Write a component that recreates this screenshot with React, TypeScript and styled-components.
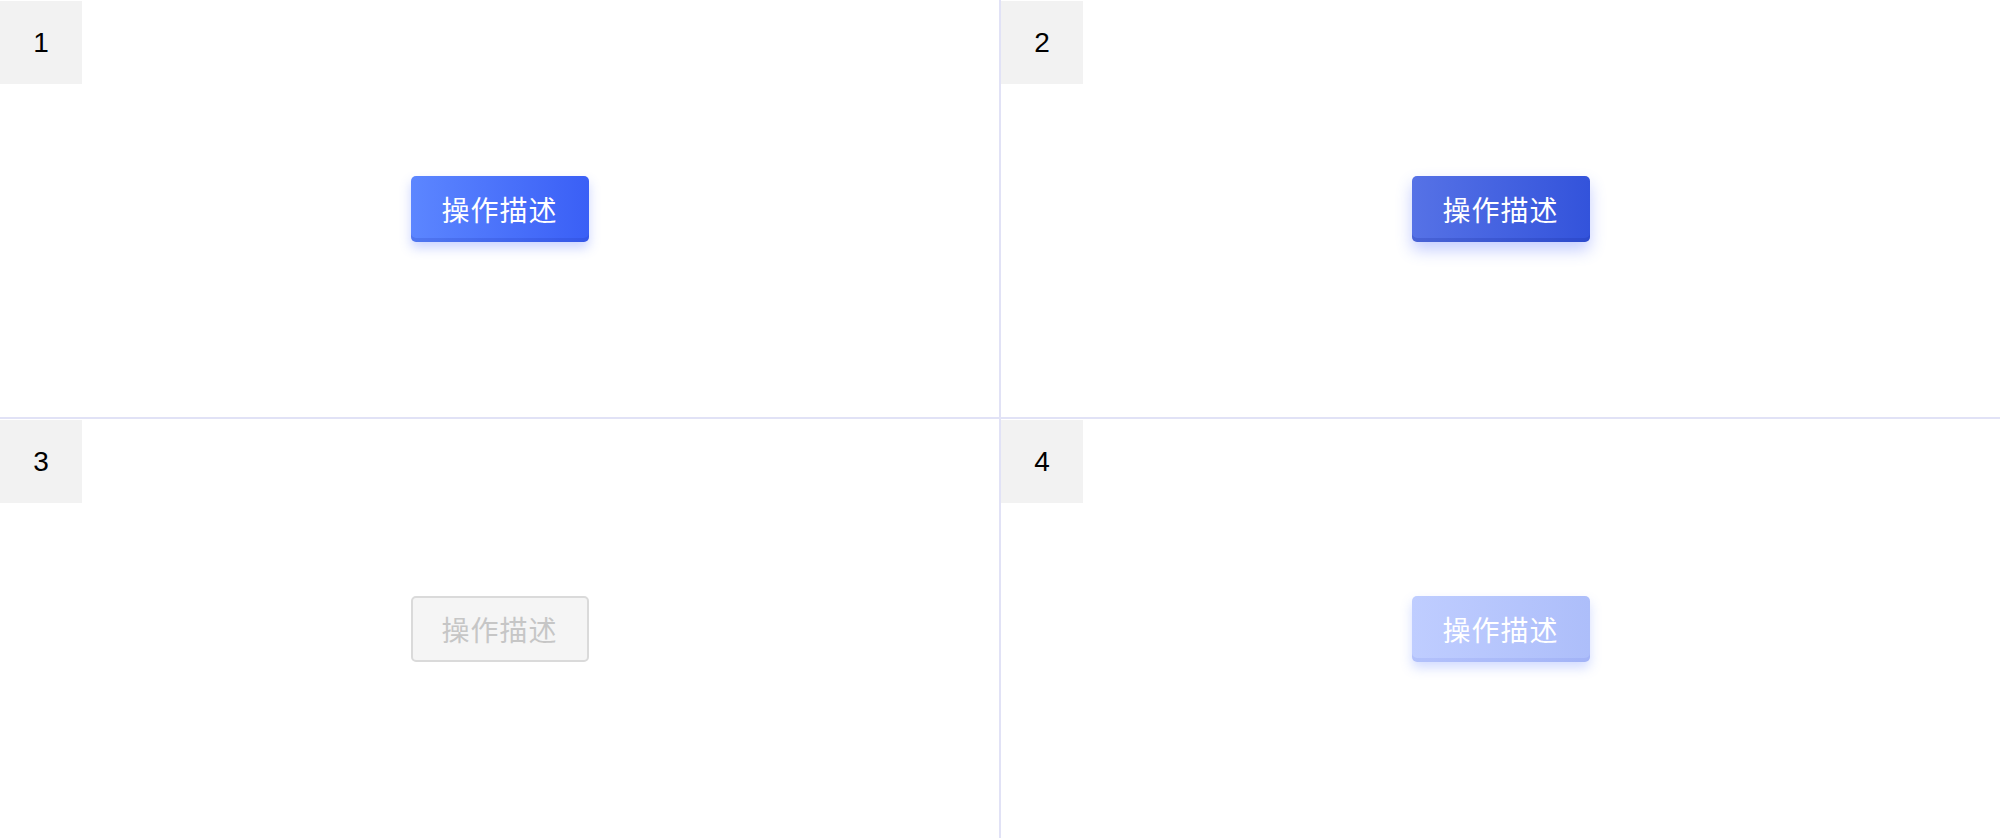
import React from 'react';
import styled, { createGlobalStyle, css } from 'styled-components';

type Variant = 'normal' | 'active' | 'disabled' | 'loading';

const cells: Array<{ id: number; variant: Variant }> = [
    { id: 1, variant: 'normal' },
    { id: 2, variant: 'active' },
    { id: 3, variant: 'disabled' },
    { id: 4, variant: 'loading' },
];

const App: React.FC = () => {
    return (
        <>
            <GlobalStyle />
            <Board>
                { cells.map(cell => (
                    <Cell key={ cell.id } $right={ cell.id % 2 === 0 } $bottom={ cell.id > 2 }>
                        <Label>{ cell.id }</Label>
                        <ActionButton $variant={ cell.variant } disabled={ cell.variant === 'disabled' }>
                            操作描述
                        </ActionButton>
                    </Cell>
                )) }
            </Board>
        </>
    );
};

export default App;

const GlobalStyle = createGlobalStyle`
    html, body {
        margin: 0;
        padding: 0;
        background: #ffffff;
    }
    body {
        font-family: "Liberation Sans", "Noto Sans CJK SC", sans-serif;
    }
`;

const Board = styled.div`
    display: grid;
    grid-template-columns: 999px 1001px;
    grid-template-rows: 417px 421px;
    width: 2000px;
    height: 838px;
    overflow: hidden;
`;

const Cell = styled.div<{ $right: boolean; $bottom: boolean }>`
    display: grid;
    place-items: center;
    padding-top: 1px;
    box-sizing: border-box;
    ${ p => p.$right && css`border-left: 2px solid #e1e2f6;` }
    ${ p => p.$bottom && css`border-top: 2px solid #e1e2f6;` }
`;

const Label = styled.div`
    grid-area: 1 / 1;
    justify-self: start;
    align-self: start;
    box-sizing: border-box;
    min-width: 82px;
    height: 83px;
    padding: 0 33px;
    background: #f2f2f2;
    color: #000;
    font-size: 28px;
    line-height: 83px;
    text-align: center;
`;

const variants = {
    normal: css`
        background: linear-gradient(90deg, #5c86ff 0%, #3a5ff6 100%);
        box-shadow: inset 0 -4px 0 rgba(30, 50, 170, 0.18), 0 6px 12px rgba(70, 100, 255, 0.28);
    `,
    active: css`
        background: linear-gradient(90deg, #5672e6 0%, #3353db 100%);
        box-shadow: inset 0 -4px 0 rgba(20, 40, 150, 0.2), 0 8px 16px rgba(70, 100, 255, 0.32);
    `,
    disabled: css`
        background: #f5f5f5;
        border: 2px solid #dadada;
        color: #c6c6c6;
        box-shadow: none;
        cursor: not-allowed;
    `,
    loading: css`
        background: linear-gradient(90deg, #bfcdff 0%, #adbefa 100%);
        box-shadow: inset 0 -4px 0 rgba(90, 110, 220, 0.12), 0 6px 12px rgba(110, 140, 255, 0.3);
    `,
};

const ActionButton = styled.button<{ $variant: Variant }>`
    grid-area: 1 / 1;
    box-sizing: border-box;
    width: 178px;
    height: 66px;
    padding: 0;
    border: none;
    border-radius: 5px;
    color: #ffffff;
    font-family: "Noto Sans CJK SC", "Liberation Sans", sans-serif;
    font-size: 28px;
    letter-spacing: 1px;
    cursor: pointer;
    ${ p => variants[p.$variant] }
`;
